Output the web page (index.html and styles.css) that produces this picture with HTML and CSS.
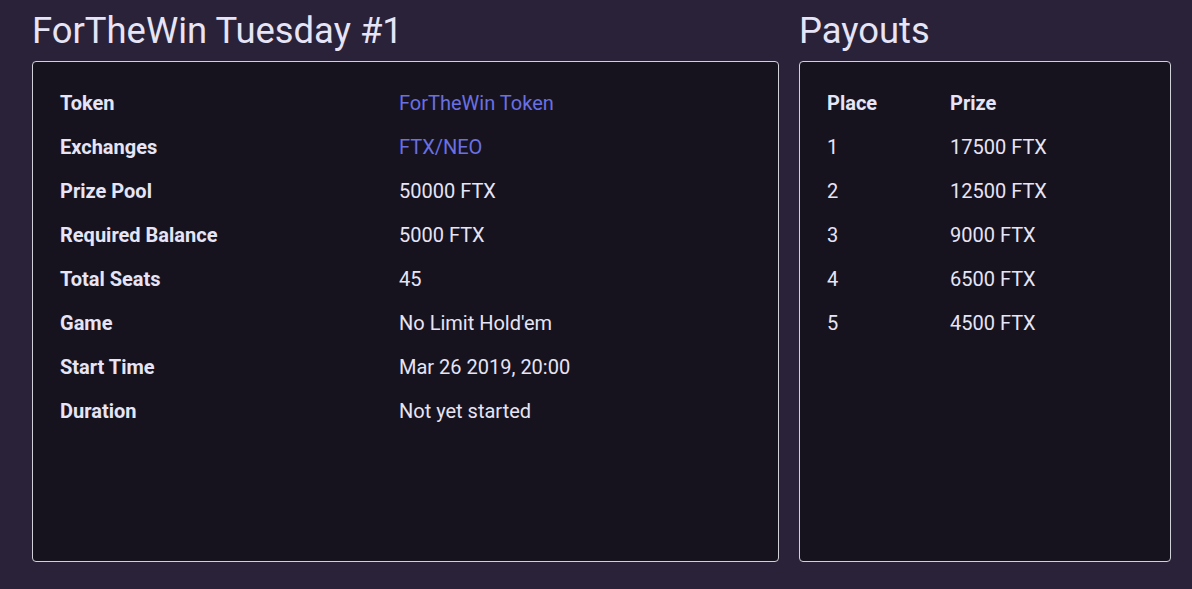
FILE: index.html
```html
<!DOCTYPE html>
<html>
<head>
<meta charset="utf-8">
<link rel="stylesheet" href="styles.css">
</head>
<body>
<div class="page">
  <section class="col col-main">
    <h1 class="title">ForTheWin Tuesday #1</h1>
    <div class="card">
      <div class="info">
        <div class="label">Token</div><div class="value"><a class="link" href="#">ForTheWin Token</a></div>
        <div class="label">Exchanges</div><div class="value"><a class="link" href="#">FTX/NEO</a></div>
        <div class="label">Prize Pool</div><div class="value">50000 FTX</div>
        <div class="label">Required Balance</div><div class="value">5000 FTX</div>
        <div class="label">Total Seats</div><div class="value">45</div>
        <div class="label">Game</div><div class="value">No Limit Hold'em</div>
        <div class="label">Start Time</div><div class="value">Mar 26 2019, 20:00</div>
        <div class="label">Duration</div><div class="value">Not yet started</div>
      </div>
    </div>
  </section>
  <section class="col col-side">
    <h1 class="title">Payouts</h1>
    <div class="card">
      <div class="payouts">
        <div class="label">Place</div><div class="label">Prize</div>
        <div class="value">1</div><div class="value">17500 FTX</div>
        <div class="value">2</div><div class="value">12500 FTX</div>
        <div class="value">3</div><div class="value">9000 FTX</div>
        <div class="value">4</div><div class="value">6500 FTX</div>
        <div class="value">5</div><div class="value">4500 FTX</div>
      </div>
    </div>
  </section>
</div>
</body>
</html>
```

FILE: styles.css
```css
html, body {
  margin: 0;
  padding: 0;
  background: #2a2239;
  color: #e6e4f7;
  font-family: Roboto, "Liberation Sans", sans-serif;
}

.page {
  display: flex;
  gap: 20px;
  padding: 11px 21px 28px 32px;
}

.col-main {
  width: 747px;
  flex: none;
}

.col-side {
  flex: 1;
}

.title {
  margin: 0 0 10px 0;
  font-size: 36.4px;
  line-height: 40px;
  font-weight: 400;
  color: #e6e4f7;
}

.card {
  box-sizing: border-box;
  height: 501px;
  background: #16131f;
  border: 1px solid #d2d0d8;
  border-radius: 4px;
  padding: 19px 27px;
}

.info {
  display: grid;
  grid-template-columns: 339px 1fr;
  grid-auto-rows: 44px;
  align-items: center;
}

.payouts {
  display: grid;
  grid-template-columns: 123px 1fr;
  grid-auto-rows: 44px;
  align-items: center;
}

.label {
  font-size: 20px;
  font-weight: 700;
}

.value {
  font-size: 20px;
  font-weight: 400;
}

.link {
  color: #6a70e3;
  text-decoration: none;
}
```
